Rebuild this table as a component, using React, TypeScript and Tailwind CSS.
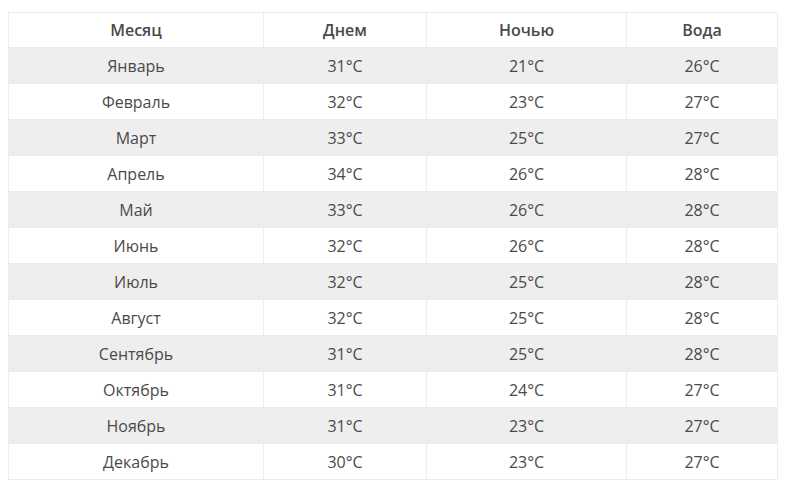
const rows: [string, string, string, string][] = [
  ["Январь", "31°C", "21°C", "26°C"],
  ["Февраль", "32°C", "23°C", "27°C"],
  ["Март", "33°C", "25°C", "27°C"],
  ["Апрель", "34°C", "26°C", "28°C"],
  ["Май", "33°C", "26°C", "28°C"],
  ["Июнь", "32°C", "26°C", "28°C"],
  ["Июль", "32°C", "25°C", "28°C"],
  ["Август", "32°C", "25°C", "28°C"],
  ["Сентябрь", "31°C", "25°C", "28°C"],
  ["Октябрь", "31°C", "24°C", "27°C"],
  ["Ноябрь", "31°C", "23°C", "27°C"],
  ["Декабрь", "30°C", "23°C", "27°C"],
];

const cell = "border border-[#ececec] text-center align-middle p-0";

export default function App() {
  return (
    <div className="bg-white w-[790px] h-[501px] pt-[12px] pl-[8px] font-['Open_Sans',_sans-serif] text-[16px] text-[#4a4a4a]">
      <table className="border-collapse table-fixed w-[769px]">
        <colgroup>
          <col className="w-[255px]" />
          <col className="w-[163px]" />
          <col className="w-[200px]" />
          <col className="w-[151px]" />
        </colgroup>
        <thead>
          <tr className="bg-white">
            <th className={`${cell} h-[35px] font-semibold`}>Месяц</th>
            <th className={`${cell} h-[35px] font-semibold`}>Днем</th>
            <th className={`${cell} h-[35px] font-semibold`}>Ночью</th>
            <th className={`${cell} h-[35px] font-semibold`}>Вода</th>
          </tr>
        </thead>
        <tbody>
          {rows.map((r, i) => (
            <tr key={r[0]} className={i % 2 === 0 ? "bg-[#efeeee]" : "bg-white"}>
              {r.map((v, j) => (
                <td key={j} className={`${cell} h-[36px]`}>
                  {v}
                </td>
              ))}
            </tr>
          ))}
        </tbody>
      </table>
    </div>
  );
}
